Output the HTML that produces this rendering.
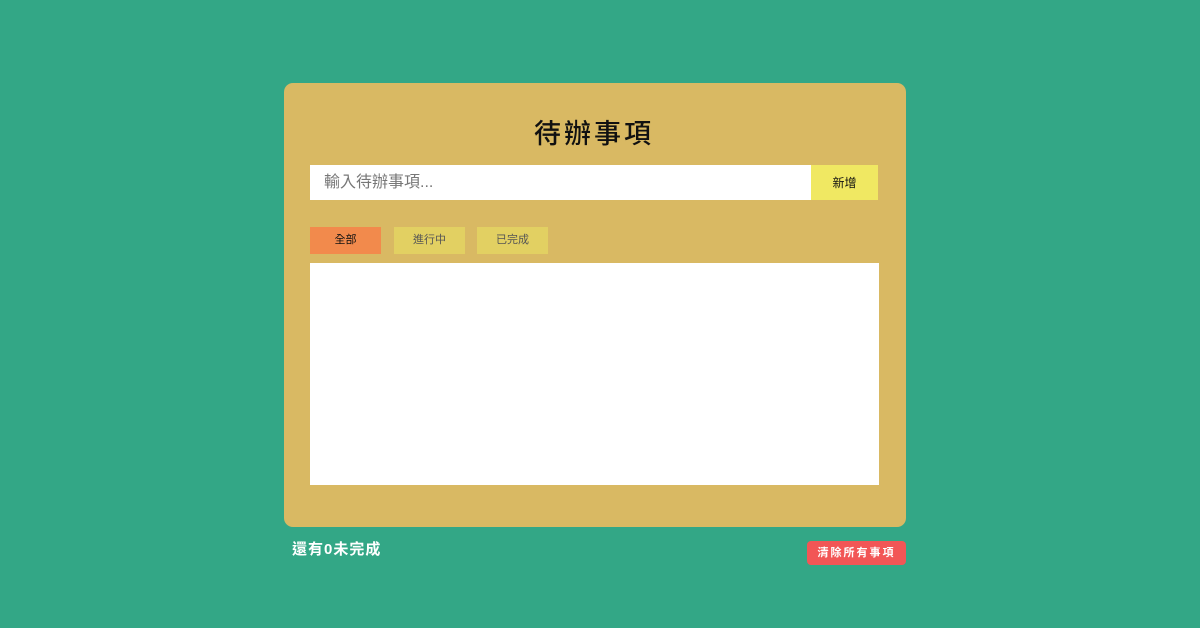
<!DOCTYPE html>
<html><head><meta charset="utf-8"><style>
*{margin:0;padding:0;box-sizing:border-box}
body{width:1200px;height:628px;background:#33a786;font-family:"Liberation Sans","Noto Sans CJK TC",sans-serif;position:relative;overflow:hidden}
.card{position:absolute;left:284px;top:83px;width:622px;height:444px;background:#d9b963;border-radius:9px}
h1{position:absolute;left:-6px;width:1200px;top:116px;text-align:center;font-size:27px;font-weight:500;letter-spacing:3px;color:#111;line-height:36px}
.inp{position:absolute;left:310px;top:165px;width:501px;height:35px;background:#fff;font-size:16px;color:#777;padding-left:14px;line-height:35px}
.add{position:absolute;left:811px;top:165px;width:67px;height:35px;background:#f0e862;font-size:12px;text-align:center;line-height:36px;color:#111}
.tab{position:absolute;top:227px;width:71px;height:27px;font-size:11px;text-align:center;line-height:27px;background:#e2d062;color:#555}
.list{position:absolute;left:310px;top:263px;width:569px;height:222px;background:#fff}
.foot{position:absolute;left:292px;top:538px;color:#fff;font-size:15px;font-weight:bold;letter-spacing:1px}
.clr{position:absolute;left:807px;top:541px;width:99px;height:24px;background:#f25656;border-radius:4px;color:#fff;font-size:11px;font-weight:bold;letter-spacing:2px;text-align:center;line-height:25px}
</style></head><body>
<div class="card"></div>
<h1>待辦事項</h1>
<div class="inp">輸入待辦事項...</div>
<div class="add">新增</div>
<div class="tab" style="left:310px;background:#f28a4c;color:#111">全部</div>
<div class="tab" style="left:394px">進行中</div>
<div class="tab" style="left:477px">已完成</div>
<div class="list"></div>
<div class="foot">還有0未完成</div>
<div class="clr">清除所有事項</div>
</body></html>
